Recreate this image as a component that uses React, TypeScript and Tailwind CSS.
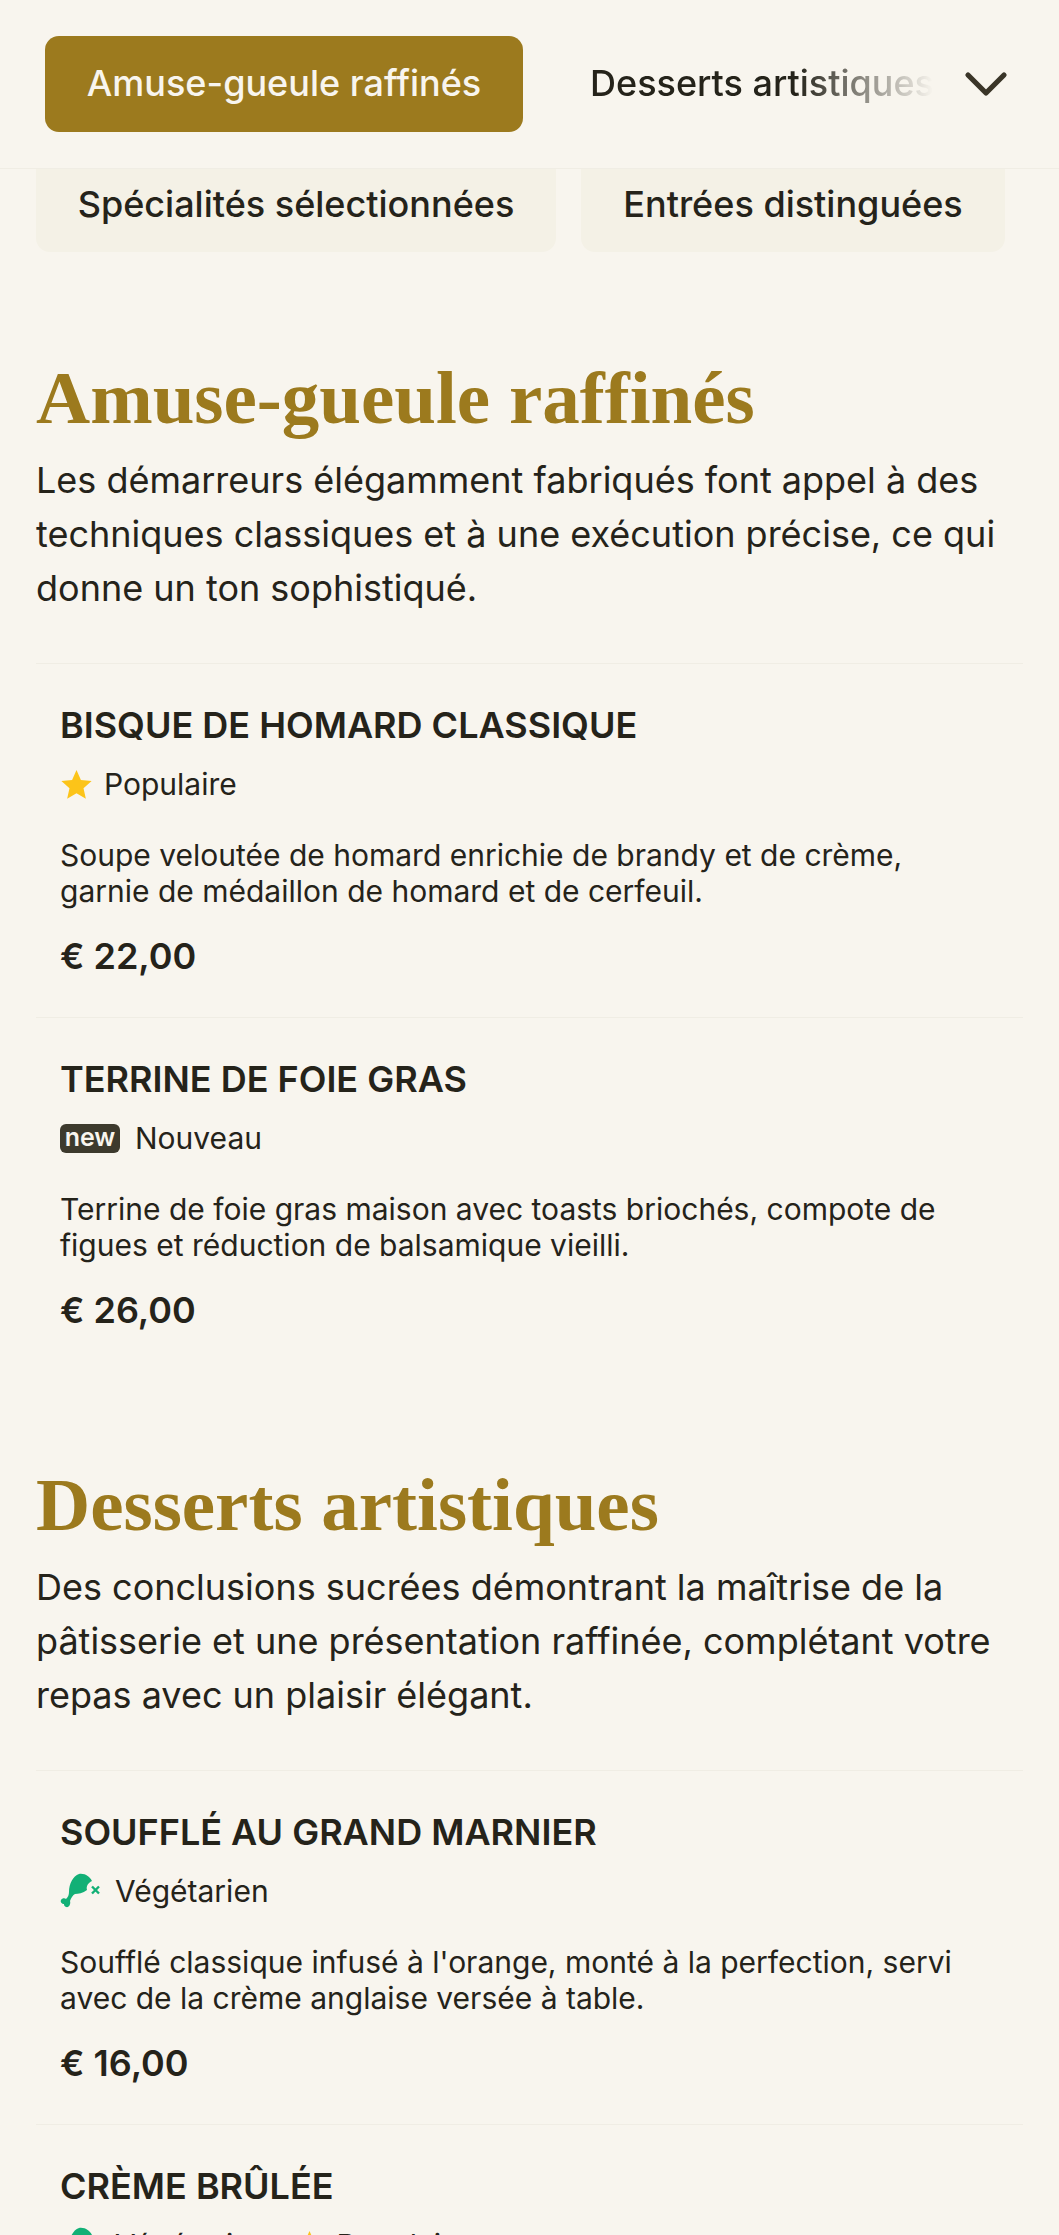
import { ChevronDown } from "lucide-react";

type Tag = "popular" | "new" | "veg";

const SECTIONS: {
  title: string;
  text: string;
  items: { name: string; tags: Tag[]; desc: string[]; price: string }[];
}[] = [
  {
    title: "Amuse-gueule raffinés",
    text: "Les démarreurs élégamment fabriqués font appel à des techniques classiques et à une exécution précise, ce qui donne un ton sophistiqué.",
    items: [
      {
        name: "BISQUE DE HOMARD CLASSIQUE",
        tags: ["popular"],
        desc: ["Soupe veloutée de homard enrichie de brandy et de crème,", "garnie de médaillon de homard et de cerfeuil."],
        price: "€ 22,00",
      },
      {
        name: "TERRINE DE FOIE GRAS",
        tags: ["new"],
        desc: ["Terrine de foie gras maison avec toasts briochés, compote de", "figues et réduction de balsamique vieilli."],
        price: "€ 26,00",
      },
    ],
  },
  {
    title: "Desserts artistiques",
    text: "Des conclusions sucrées démontrant la maîtrise de la pâtisserie et une présentation raffinée, complétant votre repas avec un plaisir élégant.",
    items: [
      {
        name: "SOUFFLÉ AU GRAND MARNIER",
        tags: ["veg"],
        desc: ["Soufflé classique infusé à l'orange, monté à la perfection, servi", "avec de la crème anglaise versée à table."],
        price: "€ 16,00",
      },
      {
        name: "CRÈME BRÛLÉE",
        tags: ["veg", "popular"],
        desc: ["Crème onctueuse à la vanille sous une fine couche de", "sucre caramélisé."],
        price: "€ 14,00",
      },
    ],
  },
];

function Star() {
  return (
    <svg viewBox="0 0 24 24" className="h-[33px] w-[33px] shrink-0 fill-[#fcc419]">
      <path d="M12 1.500l3.200 7.200 7.800.8-5.900 5.200 1.700 7.700L12 18.400l-6.800 4 1.700-7.700L1 9.500l7.800-.8z" />
    </svg>
  );
}

function Veg() {
  return (
    <svg viewBox="5 5 42 36" className="h-[36px] w-[42px] shrink-0">
      <path
        d="M24 6C30 5 35 9 37 13C33 15 31 18 32 22C28 25 23 26 20 26C18 27 16 30 15 33C16 36 14 40 11 39C9 38 9 37 9 36C7 36 5 34 6 32C7 30 10 30 11 31C13 29 14 27 14 24C14 16 18 8 24 6Z"
        className="fill-[#12b076]"
      />
      <path d="M37 18.500l7 7M44 18.500l-7 7" className="fill-none stroke-[#12b076] stroke-[2.4]" />
    </svg>
  );
}

function TagLabel({ tag }: { tag: Tag }) {
  if (tag === "popular") {
    return (
      <span className="flex items-center gap-[11px]">
        <Star />
        Populaire
      </span>
    );
  }
  if (tag === "new") {
    return (
      <span className="flex items-center gap-[15px]">
        <span className="flex h-[29px] w-[60px] items-center justify-center rounded-[6px] bg-[#3d3a2d] pb-[2px] text-[25px] leading-none font-semibold text-[#f8f5ee]">
          new
        </span>
        Nouveau
      </span>
    );
  }
  return (
    <span className="flex items-center gap-[13px]">
      <Veg />
      Végétarien
    </span>
  );
}

export default function App() {
  return (
    <div className="h-[2235px] overflow-hidden bg-[#f8f5ee] font-['Inter',sans-serif] text-[#25231a]">
      {/* Sticky category bar */}
      <div className="flex h-[169px] items-center border-b border-[#f0ede4] pl-[45px]">
        <div className="flex h-[96px] w-[478px] items-center justify-center rounded-[14px] bg-[#9c7a1e] pb-[2px] text-[36px] font-medium text-[#f8f5ee]">
          Amuse-gueule raffinés
        </div>
        <div className="ml-[67px] w-[343px] overflow-hidden pb-[2px] text-[36px] font-medium whitespace-nowrap [mask-image:linear-gradient(90deg,black_60%,transparent)]">
          Desserts artistiques
        </div>
        <ChevronDown className="ml-[17px] h-[72px] w-[72px] text-[#3a3528]" strokeWidth={1.75} />
      </div>

      <div className="flex gap-[25px] pl-[36px] text-[36px] font-medium">
        <div className="flex h-[83px] w-[520px] items-center justify-center rounded-b-[14px] bg-[#f4f1e6] pb-[14px]">
          Spécialités sélectionnées
        </div>
        <div className="flex h-[83px] w-[424px] items-center justify-center rounded-b-[14px] bg-[#f4f1e6] pb-[14px]">
          Entrées distinguées
        </div>
      </div>

      <div className="px-[36px] pt-[103px]">
        {SECTIONS.map((s) => (
          <section key={s.title} className="mb-[91px]">
            <h2 className="font-['Liberation_Serif',serif] text-[75px] leading-[86px] font-bold text-[#9c7a1e]">{s.title}</h2>
            <p className="mt-[12px] text-[36px] leading-[54px]">{s.text}</p>
            <div className="mt-[48px]">
              {s.items.map((item) => (
                <article key={item.name} className="border-t border-[#f0ede4] px-[24px] pt-[36px] pb-[36px]">
                  <h3 className="text-[36px] leading-[50px] font-semibold">{item.name}</h3>
                  <div className="mt-[14px] flex h-[40px] items-center gap-[24px] text-[30px]">
                    {item.tags.map((t) => (
                      <TagLabel key={t} tag={t} />
                    ))}
                  </div>
                  <p className="mt-[33px] text-[30px] leading-[36px]">
                    {item.desc[0]}
                    <br />
                    {item.desc[1]}
                  </p>
                  <div className="mt-[22px] text-[36px] leading-[50px] font-semibold">{item.price}</div>
                </article>
              ))}
            </div>
          </section>
        ))}
      </div>
    </div>
  );
}
